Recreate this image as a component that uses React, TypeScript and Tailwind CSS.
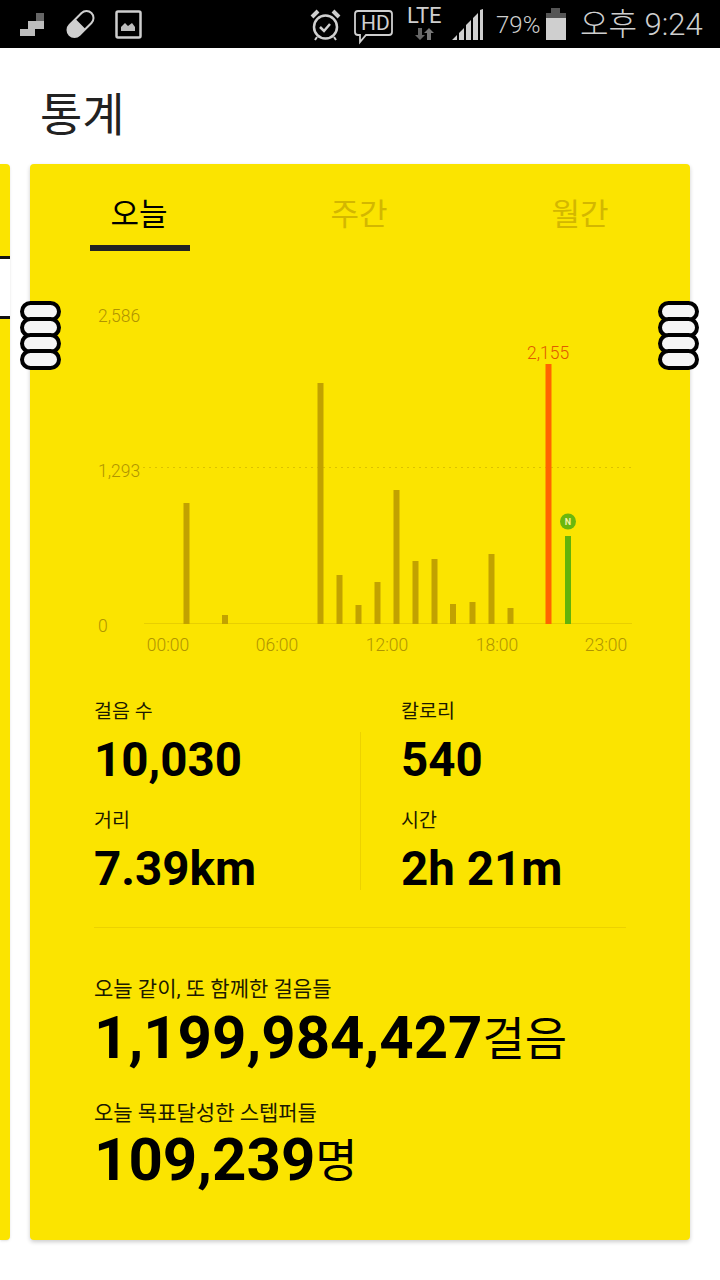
import React from 'react';

const FONT = "font-['Roboto','Noto_Sans_CJK_KR',sans-serif]";

const BARS = [
    { x: 186.5, top: 503 },
    { x: 225, top: 615 },
    { x: 320.5, top: 383 },
    { x: 339.5, top: 575 },
    { x: 358.5, top: 605 },
    { x: 377.5, top: 582 },
    { x: 396.5, top: 490 },
    { x: 415.5, top: 561 },
    { x: 434.5, top: 559 },
    { x: 453, top: 604 },
    { x: 472.5, top: 602 },
    { x: 491.5, top: 554 },
    { x: 510.5, top: 608 },
];

const HOURS = [
    { label: '00:00', x: 168 },
    { label: '06:00', x: 277 },
    { label: '12:00', x: 387 },
    { label: '18:00', x: 497 },
    { label: '23:00', x: 606 },
];

const Rings = ({ className }: { className: string }) => (
    <div className={`absolute top-[301px] w-[41px] flex flex-col ${className}`}>
        {[0, 1, 2, 3].map((i) => (
            <div key={i} className={`h-[21px] rounded-full border-[4px] border-black bg-[#f5f5f5] ${i > 0 ? '-mt-[5px]' : ''}`}></div>
        ))}
    </div>
);

const StatusBar = () => (
    <div className="h-12 bg-black text-[#cfcfcf] relative">
        <svg width="720" height="48" viewBox="0 0 720 48" className="absolute left-0 top-0">
            {/* stairs */}
            <path d="M20 29h8v-8h16v8h-9v7h-15z" fill="#bdbdbd" />
            <rect x="36" y="13" width="8" height="8" fill="#666" />
            {/* pill */}
            <g transform="rotate(-45 80.500 24)">
                <rect x="65" y="17" width="31" height="14" rx="7" fill="none" stroke="#cfcfcf" strokeWidth="2" />
                <path d="M80.500 17h-8.500a7 7 0 0 0 0 14h8.500z" fill="#cfcfcf" />
            </g>
            {/* picture */}
            <rect x="116.500" y="11.500" width="24" height="26" rx="1.500" fill="none" stroke="#cfcfcf" strokeWidth="2.500" />
            <path d="M121 31v-4l4-4 3 3 4-3 3 4v4z" fill="#bdbdbd" />
            {/* alarm */}
            <circle cx="325.500" cy="27" r="11.500" fill="none" stroke="#cfcfcf" strokeWidth="2.500" />
            <path d="M320 27l4 4 6-7" fill="none" stroke="#cfcfcf" strokeWidth="2.500" />
            <path d="M312 17l6-6M339 17l-6-6" stroke="#cfcfcf" strokeWidth="4" />
            <path d="M317 37l-2 3M334 37l2 3" stroke="#cfcfcf" strokeWidth="2" />
            {/* HD bubble */}
            <path d="M358 11h31a3 3 0 0 1 3 3v18a3 3 0 0 1-3 3h-23l-6 7v-7h-2a3 3 0 0 1-3-3v-18a3 3 0 0 1 3-3z" fill="none" stroke="#cfcfcf" strokeWidth="1.800" />
            {/* LTE arrows */}
            <path d="M418 28h4v7h3l-5 5-5-5h3z" fill="#666" />
            <path d="M427 40h4v-7h3l-5-5-5 5h3z" fill="#777" />
            {/* signal */}
            <path d="M452 40l5-5v5zM459 40v-7l5-5v12zM466 40v-15l5-5v20zM473 40v-22l5-5v27zM480 40v-30l3-1v31z" fill="#cfcfcf" />
            {/* battery */}
            <rect x="546" y="18" width="20" height="22" fill="#cfcfcf" />
            <rect x="546" y="13" width="20" height="5" fill="#555" />
            <rect x="551" y="8" width="9" height="5" fill="#555" />
        </svg>
        <span className="absolute left-[361px] top-[11px] text-[21px] leading-[25px]">HD</span>
        <span className="absolute left-[407px] top-[4px] text-[22px] leading-[24px]">LTE</span>
        <span className="absolute left-[496px] top-[12px] text-[24px] leading-[26px] font-light">79%</span>
        <span className="absolute left-[580px] top-[8px] text-[31px] leading-[34px] font-light">오후 9:24</span>
    </div>
);

const Stat = ({ label, value }: { label: string; value: string }) => (
    <div className="h-[109px]">
        <div className="text-[19.500px] leading-[22px] text-[#1c1a00]">{label}</div>
        <div className="text-[47.500px] leading-[56px] font-bold text-black mt-[9px]">{value}</div>
    </div>
);

const Chart = () => (
    <div className="relative h-[420px]">
        <svg width="660" height="420" viewBox="30 270 660 420" className="absolute left-0 top-0">
            <line x1="143" x2="632" y1="467.500" y2="467.500" stroke="#dcc200" strokeDasharray="2 4" />
            <line x1="144" x2="632" y1="623.500" y2="623.500" stroke="#e8cf00" />
            {BARS.map((b) => (
                <rect key={b.x} x={b.x - 3} y={b.top} width="6" height={624 - b.top} fill="#c2a200" />
            ))}
            <rect x="545.500" y="364" width="6" height="260" fill="#ff6500" />
            <rect x="565" y="536" width="6" height="88" fill="#63b30a" />
            <circle cx="568" cy="521.500" r="8" fill="#6ab70d" />
            <text x="568" y="525" textAnchor="middle" fontSize="9" fontWeight="700" fill="#f5f0a0" fontFamily="Roboto">N</text>
        </svg>
        <span className="absolute left-[68px] top-[35px] text-[17.500px] leading-[22px] font-light text-[#b09400]">2,586</span>
        <span className="absolute left-[68px] top-[190px] text-[17.500px] leading-[22px] font-light text-[#b09400]">1,293</span>
        <span className="absolute left-[68px] top-[345px] text-[17.500px] leading-[22px] font-light text-[#b09400]">0</span>
        <span className="absolute left-[497px] top-[72px] text-[17.500px] leading-[22px] font-light text-[#e05a00]">2,155</span>
        {HOURS.map((h) => (
            <span key={h.label} className="absolute w-[60px] text-center top-[364px] text-[17.500px] leading-[22px] font-light text-[#b09400]" style={{ left: h.x - 60 }}>
                {h.label}
            </span>
        ))}
    </div>
);

export default function App() {
    return (
        <div className={`w-[720px] h-[1280px] bg-white overflow-hidden relative ${FONT}`}>
            <StatusBar />
            <h1 className="h-[116px] pl-10 pt-[37px] text-[46px] leading-[60px] text-[#222]">통계</h1>

            <div className="flex gap-5">
                {/* 이전 카드 */}
                <div className="w-[10px] h-[1076px] bg-[#fbe400] rounded-r shadow-sm pt-[92px]">
                    <div className="h-[63px] bg-white border-y-[3px] border-[#111]"></div>
                </div>

                <div className="w-[660px] h-[1076px] bg-[#fbe400] rounded shadow-[0_2px_4px_rgba(0,0,0,0.2)] flex flex-col">
                    <div className="flex pt-[26px] h-[88px] pl-[60px] text-[31px] leading-[50px]">
                        <div className="w-[100px] h-[61px] pr-[2px] text-center text-black border-b-[6px] border-[#222]">오늘</div>
                        <div className="ml-[120px] w-[100px] pr-[2px] text-center text-[#d3b700]">주간</div>
                        <div className="ml-[121px] w-[100px] pr-[2px] text-center text-[#d3b700]">월간</div>
                    </div>
                    <div className="pt-[18px]">
                        <Chart />
                    </div>
                    <div className="px-[64px] pt-[11px]">
                        <div className="flex pb-[8px] border-b border-[#ecd200]">
                            <div className="w-[266px]">
                                <Stat label="걸음 수" value="10,030" />
                                <Stat label="거리" value="7.39km" />
                            </div>
                            <div className="w-px h-[158px] mt-[31px] bg-[#ecd200]"></div>
                            <div className="pl-[40px]">
                                <Stat label="칼로리" value="540" />
                                <Stat label="시간" value="2h 21m" />
                            </div>
                        </div>
                        <div className="mt-[48px] text-[21px] leading-[26px] text-[#1c1a00]">오늘 같이, 또 함께한 걸음들</div>
                        <div className="flex items-baseline text-black mt-[1px]">
                            <span className="text-[60px] leading-[70px] font-bold">1,199,984,427</span>
                            <span className="text-[46px] leading-[70px] -translate-y-[3px]">걸음</span>
                        </div>
                        <div className="mt-[23px] text-[21px] leading-[26px] text-[#1c1a00]">오늘 목표달성한 스텝퍼들</div>
                        <div className="flex items-baseline text-black -mt-[1px]">
                            <span className="text-[60px] leading-[70px] font-bold">109,239</span>
                            <span className="text-[46px] leading-[70px] -translate-y-[3px]">명</span>
                        </div>
                    </div>
                </div>
            </div>

            <Rings className="left-[20px]" />
            <Rings className="left-[658px]" />
        </div>
    );
}
